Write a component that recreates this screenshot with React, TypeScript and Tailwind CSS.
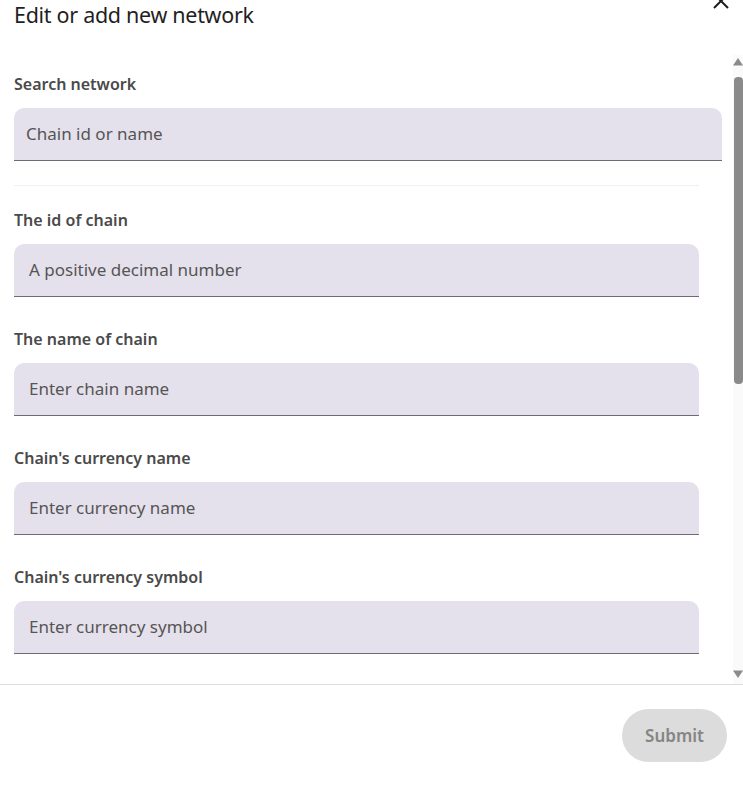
import React from "react";

const fields = [
  { label: "The id of chain", placeholder: "A positive decimal number" },
  { label: "The name of chain", placeholder: "Enter chain name" },
  { label: "Chain's currency name", placeholder: "Enter currency name" },
  { label: "Chain's currency symbol", placeholder: "Enter currency symbol" },
];

const font = { fontFamily: '"Noto Sans", "Open Sans", sans-serif' };

export default function App() {
  return (
    <div className="w-[743px] h-[801px] bg-white flex flex-col overflow-hidden" style={font}>
      {/* header */}
      <div className="h-[55px] shrink-0 flex justify-between items-start pl-[14px] pr-[12px]">
        <h1 className="text-[21.5px] leading-[30px] text-[#1f1f1f] tracking-[-0.3px]">
          Edit or add new network
        </h1>
        <svg width="20" height="20" viewBox="0 0 20 20" className="mt-[-9px]">
          <path d="M3 3 L17 17 M17 3 L3 17" stroke="#1c1c1c" strokeWidth="2" />
        </svg>
      </div>

      {/* body */}
      <div className="h-[629px] shrink-0 flex">
        <div className="flex-1 overflow-hidden pl-[14px] pt-[19px]">
          <label className="block text-[16px] leading-[20px] font-semibold text-[#4a4a4a]">
            Search network
          </label>
          <div className="mt-[14px] w-[708px] h-[53px] rounded-t-[10px] bg-[#e5e1ec] border-b border-[#6f6a76] flex items-center pl-[12px]">
            <span className="text-[17px] text-[#555555]">Chain id or name</span>
          </div>
          <div className="mt-[24px] w-[685px] h-px bg-[#f0f0f0]" />
          <div className="pt-[24px] flex flex-col gap-[32px]">
            {fields.map((f) => (
              <div key={f.label}>
                <label className="block text-[16px] leading-[20px] font-semibold text-[#4a4a4a]">
                  {f.label}
                </label>
                <div className="mt-[14px] w-[685px] h-[53px] rounded-t-[10px] bg-[#e5e1ec] border-b border-[#6f6a76] flex items-center pl-[15px]">
                  <span className="text-[17px] text-[#555555]">{f.placeholder}</span>
                </div>
              </div>
            ))}
          </div>
        </div>

        {/* scrollbar */}
        <div className="w-[10px] shrink-0 bg-[#fafafa] flex flex-col items-center pt-[2px] pb-[5px]">
          <svg width="10" height="9" viewBox="0 0 10 9">
            <path d="M5 1 L10 8.5 L0 8.5 Z" fill="#8a8a8a" />
          </svg>
          <div className="mt-[11px] w-[9px] ml-[1px] h-[307px] rounded-[4px] bg-[#8a8a8a]" />
          <div className="flex-1" />
          <svg width="10" height="9" viewBox="0 0 10 9">
            <path d="M0 0.5 L10 0.5 L5 8 Z" fill="#8a8a8a" />
          </svg>
        </div>
      </div>

      {/* footer */}
      <div className="flex-1 border-t border-[#dedede] flex justify-end items-start pt-[24px] pr-[16px]">
        <button className="w-[105px] h-[53px] rounded-full bg-[#dcdcdc] text-[#858585] text-[17px] font-semibold">
          Submit
        </button>
      </div>
    </div>
  );
}
